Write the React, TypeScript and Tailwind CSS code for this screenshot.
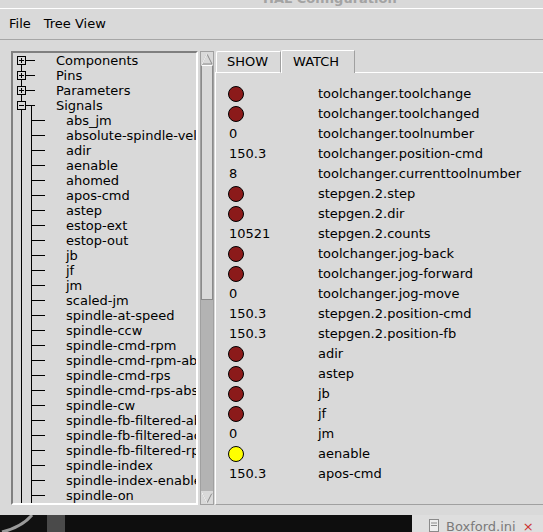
import React from "react";

const font = { fontFamily: '"DejaVu Sans", "Liberation Sans", sans-serif' };

const signals = [
  "abs_jm",
  "absolute-spindle-vel",
  "adir",
  "aenable",
  "ahomed",
  "apos-cmd",
  "astep",
  "estop-ext",
  "estop-out",
  "jb",
  "jf",
  "jm",
  "scaled-jm",
  "spindle-at-speed",
  "spindle-ccw",
  "spindle-cmd-rpm",
  "spindle-cmd-rpm-abs",
  "spindle-cmd-rps",
  "spindle-cmd-rps-abs",
  "spindle-cw",
  "spindle-fb-filtered-abs",
  "spindle-fb-filtered-acc",
  "spindle-fb-filtered-rps",
  "spindle-index",
  "spindle-index-enable",
  "spindle-on",
];

type Watch = { kind: "red" | "yellow" | "num"; value?: string; name: string };

const watches: Watch[] = [
  { kind: "red", name: "toolchanger.toolchange" },
  { kind: "red", name: "toolchanger.toolchanged" },
  { kind: "num", value: "0", name: "toolchanger.toolnumber" },
  { kind: "num", value: "150.3", name: "toolchanger.position-cmd" },
  { kind: "num", value: "8", name: "toolchanger.currenttoolnumber" },
  { kind: "red", name: "stepgen.2.step" },
  { kind: "red", name: "stepgen.2.dir" },
  { kind: "num", value: "10521", name: "stepgen.2.counts" },
  { kind: "red", name: "toolchanger.jog-back" },
  { kind: "red", name: "toolchanger.jog-forward" },
  { kind: "num", value: "0", name: "toolchanger.jog-move" },
  { kind: "num", value: "150.3", name: "stepgen.2.position-cmd" },
  { kind: "num", value: "150.3", name: "stepgen.2.position-fb" },
  { kind: "red", name: "adir" },
  { kind: "red", name: "astep" },
  { kind: "red", name: "jb" },
  { kind: "red", name: "jf" },
  { kind: "num", value: "0", name: "jm" },
  { kind: "yellow", name: "aenable" },
  { kind: "num", value: "150.3", name: "apos-cmd" },
];

// tree connector lines for one 15px row
function Branch({ type, first }: { type: "plus" | "minus" | "leaf"; first?: boolean }) {
  return (
    <svg width="43" height="15" viewBox="0 0 43 15" className="shrink-0" shapeRendering="crispEdges">
      <line x1="8.5" y1={first ? 7 : 0} x2="8.5" y2="15" stroke="#000" />
      {type === "leaf" ? (
        <>
          <line x1="18.5" y1="0" x2="18.5" y2="15" stroke="#000" />
          <line x1="18.5" y1="7.5" x2="32" y2="7.5" stroke="#000" />
        </>
      ) : (
        <>
          <rect x="4.5" y="3.5" width="8" height="8" fill="#d9d9d9" stroke="#000" />
          <line x1="6" y1="7.5" x2="11" y2="7.5" stroke="#000" />
          {type === "plus" && <line x1="8.5" y1="5" x2="8.5" y2="10" stroke="#000" />}
          <line x1="12.5" y1="7.5" x2="22" y2="7.5" stroke="#000" />
          {type === "minus" && <line x1="18.5" y1="7.5" x2="18.5" y2="15" stroke="#000" />}
        </>
      )}
    </svg>
  );
}

function Arrow({ up }: { up?: boolean }) {
  return (
    <div className="h-[13px] flex items-center justify-center bg-[#d9d9d9]">
      <svg width="12" height="12" viewBox="0 0 12 12">
        {up ? (
          <>
            <polygon points="6,1 11,11 1,11" fill="#d9d9d9" stroke="#8a8a8a" />
            <line x1="6" y1="1" x2="1" y2="11" stroke="#fff" />
          </>
        ) : (
          <>
            <polygon points="1,1 11,1 6,11" fill="#d9d9d9" stroke="#8a8a8a" />
            <line x1="1" y1="1" x2="11" y2="1" stroke="#fff" />
            <line x1="1" y1="1" x2="6" y2="11" stroke="#fff" />
          </>
        )}
      </svg>
    </div>
  );
}

export default function App() {
  return (
    <div className="w-[543px] h-[532px] overflow-hidden bg-[#d9d9d9] text-[13px] text-black flex flex-col" style={font}>
      {/* title bar remnant */}
      <div className="h-[8px] overflow-hidden pl-[263px]">
        <div className="mt-[-8px] leading-[13px] font-bold text-[#a3a3a3] whitespace-nowrap">HAL Configuration</div>
      </div>
      <div className="h-px bg-white" />

      {/* menu */}
      <div className="h-[30px] flex items-center pl-[9px] gap-[13px]">
        <span>File</span>
        <span>Tree View</span>
      </div>
      <div className="h-px bg-[#a6a6a6]" />

      {/* main area */}
      <div className="h-[475px] flex pt-[10px] pl-[11px]">
        {/* tree */}
        <div className="mt-px w-[187px] h-[454px] border-2 border-t-[#7f7f7f] border-l-[#7f7f7f] border-b-white border-r-white overflow-hidden">
          <div className="flex flex-col">
            <div className="h-[15px] flex items-center whitespace-nowrap">
              <Branch type="plus" first />
              <span className="leading-[15px]">Components</span>
            </div>
            <div className="h-[15px] flex items-center whitespace-nowrap">
              <Branch type="plus" />
              <span className="leading-[15px]">Pins</span>
            </div>
            <div className="h-[15px] flex items-center whitespace-nowrap">
              <Branch type="plus" />
              <span className="leading-[15px]">Parameters</span>
            </div>
            <div className="h-[15px] flex items-center whitespace-nowrap">
              <Branch type="minus" />
              <span className="leading-[15px]">Signals</span>
            </div>
            {signals.map((s) => (
              <div key={s} className="h-[15px] flex items-center whitespace-nowrap">
                <Branch type="leaf" />
                <span className="leading-[15px] pl-[10px]">{s}</span>
              </div>
            ))}
          </div>
        </div>

        {/* scrollbar */}
        <div className="mt-px ml-[2px] w-[14px] h-[454px] border border-[#a0a0a0] flex flex-col">
          <Arrow up />
          <div className="h-[235px] border border-[#8a8a8a] border-t-white bg-[#d9d9d9]" />
          <div className="flex-1 bg-[#b3b3b3]" />
          <Arrow />
        </div>

        {/* notebook */}
        <div className="ml-px flex-1 flex flex-col h-[455px]">
          <div className="h-[23px] flex items-end">
            <div className="w-px h-px bg-white" />
            <div className="w-[65px] h-[22px] border-t border-l border-white border-r border-r-[#a0a0a0] border-b border-b-white rounded-tl-[2px] flex items-center pl-[10px]">
              SHOW
            </div>
            <div className="w-[74px] h-[23px] border-t border-l border-white border-r border-r-[#a0a0a0] rounded-tl-[2px] flex items-center pl-[11px]">
              WATCH
            </div>
            <div className="flex-1 h-px bg-white" />
          </div>
          <div className="flex-1 border-l border-white border-b border-b-[#a0a0a0] pt-[11px] pl-[12px]">
            {watches.map((w, i) => (
              <div key={i} className="h-[20px] flex items-center whitespace-nowrap">
                <div className="w-[90px] flex items-center">
                  {w.kind === "num" ? (
                    <span className="pl-px">{w.value}</span>
                  ) : (
                    <div
                      className={
                        "w-[16px] h-[16px] rounded-full border border-black " +
                        (w.kind === "red" ? "bg-[#8b1a1a]" : "bg-[#ffff00]")
                      }
                    />
                  )}
                </div>
                <span>{w.name}</span>
              </div>
            ))}
          </div>
        </div>
      </div>

      {/* desktop strip below window */}
      <div className="h-[17px] flex">
        <div className="w-[47px] bg-[#111] flex items-start">
          <svg width="47" height="17" viewBox="0 0 47 17">
            <path d="M2 17 Q 22 12 32 0" stroke="#9a9a9a" strokeWidth="3" fill="none" />
          </svg>
        </div>
        <div className="w-[18px] bg-[#4a4a4a]" />
        <div className="w-[347px] bg-[#0e0e0e]" />
        <div className="flex-1 bg-[#dedede] flex items-start pl-[17px] pt-[4px] gap-[7px] overflow-hidden">
          <svg width="10" height="13" viewBox="0 0 10 13">
            <rect x="0.5" y="0.5" width="9" height="12" fill="#eee" stroke="#8a8a8a" />
            <line x1="2" y1="4" x2="8" y2="4" stroke="#8a8a8a" />
            <line x1="2" y1="6.5" x2="8" y2="6.5" stroke="#8a8a8a" />
          </svg>
          <span className="text-[#7a7a7a] leading-[15px] whitespace-nowrap">Boxford.ini</span>
          <span className="text-[#c33] leading-[15px]">×</span>
        </div>
      </div>
    </div>
  );
}
